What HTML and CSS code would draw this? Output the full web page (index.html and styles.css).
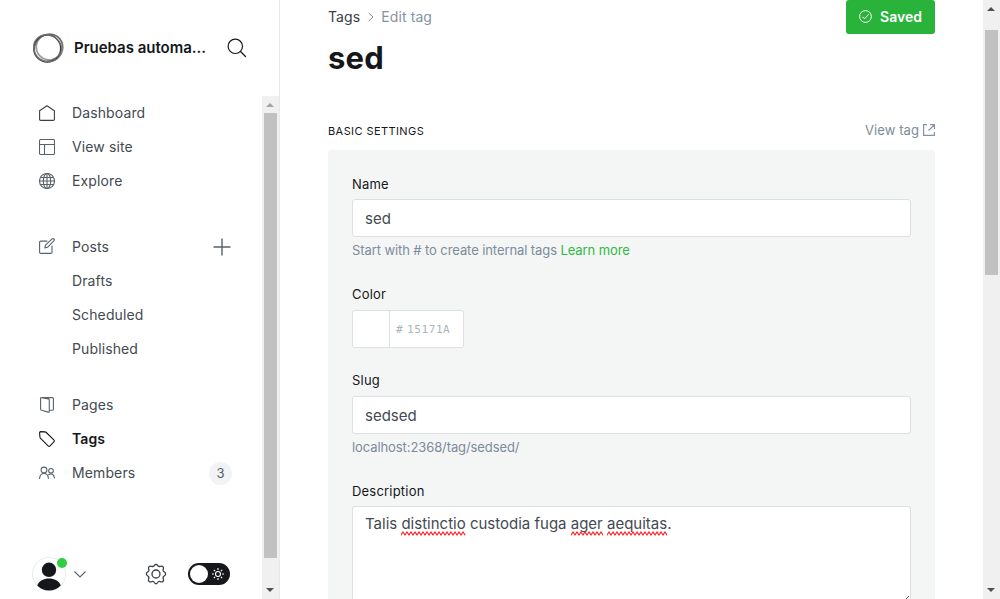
FILE: index.html
```html
<!DOCTYPE html>
<html lang="en">
<head>
<meta charset="utf-8">
<title>Edit tag</title>
<link rel="stylesheet" href="styles.css">
</head>
<body>
<div class="app">
  <nav class="sidebar">
    <header class="site">
      <svg class="site-logo" width="32" height="32" viewBox="0 0 32 32" fill="none">
        <ellipse cx="17.600" cy="15" rx="13.300" ry="13" stroke="#999" stroke-width="1.700"/>
        <circle cx="15.200" cy="16.500" r="13.500" stroke="#333" stroke-width="1.400"/>
        <ellipse cx="16.300" cy="15.700" rx="14.400" ry="12.800" transform="rotate(-38 16.300 15.700)" stroke="#666" stroke-width="1.200"/>
        <ellipse cx="15.700" cy="16.200" rx="14.600" ry="13" transform="rotate(35 15.700 16.200)" stroke="#777" stroke-width="1"/>
      </svg>
      <span class="site-name">Pruebas automa...</span>
      <svg class="search" width="20" height="20" viewBox="0 0 20 20" fill="none" stroke="#15171a" stroke-width="1.200" stroke-linecap="round"><circle cx="8.300" cy="8.300" r="7.200"/><path d="M13.500 13.500l5 5"/></svg>
    </header>
    <div class="side-body">
      <div class="side-content">
        <ul class="menu">
          <li class="item"><svg class="icon" viewBox="0 0 16 16"><path d="M.6 5.800L8 .7l7.400 5.100v8.400q0 1.200-1.200 1.200H1.800q-1.200 0-1.200-1.200z" stroke="#394047"/></svg><span>Dashboard</span></li>
          <li class="item"><svg class="icon" viewBox="0 0 16 16"><rect x=".5" y=".5" width="15" height="15" rx="1.200"/><path d="M.5 5.500h15M5.500 5.500v10"/></svg><span>View site</span></li>
          <li class="item"><svg class="icon" viewBox="0 0 16 16"><circle cx="8" cy="8" r="7.500"/><ellipse cx="8" cy="8" rx="3.700" ry="7.500"/><path d="M8 .5v15M.5 8h15M1.800 4.500h12.400M1.800 11.500h12.400"/></svg><span>Explore</span></li>
        </ul>
        <ul class="menu menu-posts">
          <li class="item"><svg class="icon icon-posts" viewBox="0 0 16 16"><path d="M8 3.100H1.700Q.6 3.100.6 4.200v10.100q0 1.100 1.100 1.100h10.200q1.100 0 1.100-1.100V8M6.500 7.200L13.100.9q.9-.7 1.800.1t.1 1.700L8.500 9.300l-2.700.7z"/></svg><span>Posts</span>
            <svg class="plus" width="18" height="18" viewBox="0 0 18 18" fill="none" stroke="#59616a" stroke-width="1.400"><path d="M9 .5v17M.5 9h17"/></svg></li>
          <li class="item sub"><span>Drafts</span></li>
          <li class="item sub"><span>Scheduled</span></li>
          <li class="item sub"><span>Published</span></li>
        </ul>
        <ul class="menu menu-manage">
          <li class="item"><svg class="icon" viewBox="0 0 16 16"><path d="M1.600 1.500q0-1 1-.8l6.700 1.200q1 .2 1 1.200v11.200q0 1-1 .8l-6.700-1.800q-1-.3-1-1.300zM3.500.6h9.800q1.100 0 1.100 1.100v10.500q0 1.100-1.100 1.100h-3"/></svg><span>Pages</span></li>
          <li class="item active"><svg class="icon" viewBox="0 0 16 16"><path d="M.6 1.600Q.6.6 1.600.6L6 .9q.8.100 1.300.6l7.500 7.400q1 1 0 2l-3.700 3.900q-1 1-2 0L1.600 7.400Q1 6.800.9 6z"/></svg><span>Tags</span></li>
          <li class="item"><svg class="icon" viewBox="0 0 16 16"><circle cx="5" cy="5" r="2.900"/><circle cx="12" cy="5.800" r="2.300"/><path d="M.6 13.500c.2-3.200 1.700-5 4.400-5s4.200 1.800 4.400 5M9.600 9.700C12 8 15.300 9.400 15.400 13"/></svg><span>Members</span><b class="count">3</b></li>
        </ul>
        <footer class="account">
          <span class="avatar"><svg width="34" height="34" viewBox="0 0 34 34"><circle cx="17" cy="17" r="16.500" fill="#fff" stroke="#e8eaed"/><circle cx="17" cy="12.800" r="7.200" fill="#15171a"/><path d="M5.200 28.500c3-9.400 20.600-9.400 23.600 0A16.500 16.500 0 0 1 5.200 28.500z" fill="#15171a"/></svg><i class="dot"></i></span>
          <svg class="chevron" width="12" height="7" viewBox="0 0 12 7" fill="none" stroke="#59616a" stroke-width="1.100"><path d="M.5.5L6 6 11.500.5"/></svg>
          <svg class="gear" width="22" height="22" viewBox="0 0 22 22" fill="none" stroke="#394047" stroke-width="1.300" stroke-linejoin="round"><circle cx="11" cy="11" r="4"/><path d="M9.300 2.500Q11 .1 12.700 2.500 13.300 4 15.200 3.300 18.900 2.300 18.400 6q-1 1.900.8 2.800 2.900 2.100 0 4.200-1.800 1-.8 2.900.8 3.800-3.100 2.800-2-.8-2.600.8-1.700 2.500-3.400 0-.6-1.600-2.500-.8-4 1-3.200-2.800 1-1.900-.8-2.900-2.900-2.100 0-4.200Q4.600 7.900 3.600 6 3.100 2.300 6.800 3.300 8.700 4 9.300 2.500z"/></svg>
          <span class="toggle"><i class="knob"></i><svg width="14" height="14" viewBox="0 0 14 14" fill="none" stroke="#fff" stroke-width="1.100"><circle cx="7" cy="7" r="2.500"/><path d="M7 1v1.900M7 11.100V13M1 7h1.900M11.100 7H13M2.800 2.800l1.300 1.300M9.900 9.900l1.300 1.300M2.800 11.200l1.300-1.300M9.900 4.100l1.300-1.300"/></svg></span>
        </footer>
      </div>
      <div class="scrollbar"><svg class="arrow light" viewBox="0 0 8 4"><path d="M4 0l4 4H0z"/></svg><div class="thumb side-thumb"></div><svg class="arrow down" viewBox="0 0 8 4"><path d="M0 0h8L4 4z"/></svg></div>
    </div>
  </nav>
  <main class="main">
    <header class="page-head">
      <div>
        <div class="crumbs"><span>Tags</span><svg width="6" height="10" viewBox="0 0 6 10" fill="none" stroke="#7c8b9a"><path d="M.7 1L5 5 .7 9"/></svg><span class="crumb-current">Edit tag</span></div>
        <h1 class="title">sed</h1>
      </div>
      <button class="saved"><svg width="13" height="13" viewBox="0 0 13 13" fill="none" stroke="#fff"><circle cx="6.500" cy="6.500" r="5.900"/><path d="M3.500 6.800l2 2 4.200-4.500"/></svg><span>Saved</span></button>
    </header>
    <div class="section-head"><h2 class="section-title">Basic settings</h2><a class="view-tag"><span>View tag</span><svg width="12" height="12" viewBox="0 0 12 12" fill="none" stroke="#8594a3" stroke-width="1.200"><path d="M4 .6H.6v10.800h10.800V8M7 .6h4.400V5M11.200.8L5.500 6.500"/></svg></a></div>
    <section class="panel">
      <label class="label">Name</label>
      <div class="input">sed</div>
      <p class="help">Start with # to create internal tags <a class="learn">Learn more</a></p>
      <label class="label label-color">Color</label>
      <div class="color"><span class="swatch"></span><span class="hash">#</span><span class="hex">15171A</span></div>
      <label class="label label-slug">Slug</label>
      <div class="input">sedsed</div>
      <p class="help">localhost:2368/tag/sedsed/</p>
      <label class="label label-desc">Description</label>
      <div class="input textarea">Talis <span class="misspelt">distinctio<svg class="wave"><defs><pattern id="zig" width="4" height="5" patternUnits="userSpaceOnUse"><path d="M-2 1L0 4 2 1 4 4 6 1" fill="none" stroke="#ff1a1a" stroke-width="1.100"/></pattern></defs><rect width="100%" height="5" fill="url(#zig)"/></svg></span> custodia fuga <span class="misspelt">ager<svg class="wave"><rect width="100%" height="5" fill="url(#zig)"/></svg></span> <span class="misspelt">aequitas<svg class="wave"><rect width="100%" height="5" fill="url(#zig)"/></svg></span>.<svg class="grip" width="6" height="6" viewBox="0 0 6 6"><path d="M0 6L6 0" stroke="#555"/></svg></div>
    </section>
  </main>
  <div class="scrollbar page-scroll"><svg class="arrow" viewBox="0 0 8 4"><path d="M4 0l4 4H0z"/></svg><div class="thumb page-thumb"></div><svg class="arrow down" viewBox="0 0 8 4"><path d="M0 0h8L4 4z"/></svg></div>
</div>
</body>
</html>
```
FILE: styles.css
```css
* { box-sizing: border-box; }
body { margin: 0; background: #fff; color: #15171a; font-family: Inter, "Liberation Sans", sans-serif; overflow: hidden; }
ul, h1, h2, p { margin: 0; padding: 0; list-style: none; }
svg { flex: none; display: block; }
.app { display: flex; height: 599px; }

.sidebar { width: 280px; flex: none; display: flex; flex-direction: column; border-right: 1px solid #e6e9eb; }
.site { height: 96px; flex: none; display: flex; align-items: center; padding-left: 32px; }
.site-name { width: 154px; padding: 0 0 2px 10px; font-size: 15px; font-weight: 600; letter-spacing: -.02px; white-space: nowrap; }
.search { margin-left: 9px; }
.side-body { flex: 1; display: flex; min-height: 0; }
.side-content { flex: 1; display: flex; flex-direction: column; padding: 0 30px 0 39px; }
.menu-posts { margin-top: 32px; }
.menu-manage { margin-top: 22px; }
.item { height: 34px; display: flex; align-items: center; font-size: 14px; letter-spacing: .12px; color: #434a52; }
.item > span { padding-bottom: 2px; }
.icon { width: 16px; height: 16px; margin-right: 17px; fill: none; stroke: #59616a; stroke-width: 1.1; stroke-linejoin: round; stroke-linecap: round; }
.icon-posts { margin-bottom: 2px; }
.sub { padding-left: 33px; }
.plus { margin: 0 1px 0 auto; }
.active { color: #15171a; font-weight: 600; }
.active .icon { stroke: #15171a; }
.count { width: 23px; height: 23px; padding-bottom: 1px; margin-left: auto; border-radius: 50%; background: #f1f3f4; display: flex; align-items: center; justify-content: center; font-size: 13px; font-weight: 400; letter-spacing: 0; color: #57606a; }
.account { display: flex; align-items: center; height: 50px; margin: auto 0 0 -7px; }
.avatar { position: relative; }
.dot { position: absolute; top: 1px; right: -1px; width: 10px; height: 10px; border-radius: 50%; background: #30cf43; }
.chevron { margin-left: 8px; }
.gear { margin-left: 59px; }
.toggle { width: 42px; height: 22px; margin-left: 21px; padding: 0 5px 0 2px; border-radius: 11px; background: #15171a; display: flex; align-items: center; justify-content: space-between; }
.knob { width: 18px; height: 18px; border-radius: 50%; background: #fff; }

.scrollbar { width: 17px; flex: none; display: flex; flex-direction: column; align-items: center; background: #f0f0f0; padding: 7px 0; }
.arrow { width: 8px; height: 4px; margin-right: 1px; fill: #505050; }
.light { fill: #a3a3a3; }
.down { margin-top: auto; }
.thumb { width: 13px; background: #c1c1c1; }
.side-thumb { height: 445px; margin-top: 6px; }
.page-thumb { height: 245px; margin-top: 19px; }

.main { flex: 1; display: flex; flex-direction: column; padding: 0 48px; min-width: 0; }
.page-head { height: 121px; flex: none; display: flex; justify-content: space-between; }
.crumbs { height: 34px; padding-bottom: 1px; display: flex; align-items: center; gap: 7.5px; font-size: 14px; color: #394047; letter-spacing: .1px; }
.crumb-current { color: #8594a3; }
.title { font-size: 31px; line-height: 38px; font-weight: 700; letter-spacing: .2px; margin-top: 5px; }
.saved { width: 89px; height: 34px; padding: 0 0 1px; border: 0; border-radius: 3px; background: #2ab33b; color: #fff; font: 600 14px Inter, "Liberation Sans", sans-serif; display: flex; align-items: center; justify-content: center; gap: 8px; }
.section-head { height: 29px; flex: none; display: flex; justify-content: space-between; }
.section-title { font-size: 11px; line-height: 20px; font-weight: 400; text-transform: uppercase; letter-spacing: .42px; }
.view-tag { height: 18px; display: flex; align-items: center; gap: 4px; font-size: 13px; color: #7c8b9a; letter-spacing: .08px; }
.panel { flex: 1; min-height: 0; padding: 24px 24px 0; background: #f4f6f6; border-radius: 3px 3px 0 0; display: flex; flex-direction: column; }
.label { height: 20px; margin-bottom: 5px; line-height: 20px; font-size: 13px; font-weight: 400; letter-spacing: .2px; flex: none; }
.input { height: 38px; flex: none; padding: 0 12px; border: 1px solid #dddfe1; border-radius: 3px; background: #fff; font-size: 15px; line-height: 38px; color: #434a52; }
.help { font-size: 13px; line-height: 20px; margin: 3px 0 1px; letter-spacing: -.09px; color: #7c8b9a; }
.learn { color: #30b943; }
.label-color { margin-top: 23px; margin-bottom: 6px; }
.color { width: 112px; height: 38px; flex: none; display: flex; align-items: center; border: 1px solid #dddfe1; border-radius: 3px; background: #fff; font-family: "DejaVu Sans Mono", monospace; font-size: 11px; color: #abb4be; }
.swatch { width: 37px; height: 36px; border-right: 1px solid #dddfe1; margin-right: 6px; }
.hash { width: 11px; padding-top: 1px; }
.hex { letter-spacing: .6px; }
.label-slug { margin-top: 22px; margin-bottom: 6px; }
.label-desc { margin-top: 23px; }
.textarea { flex: 1; position: relative; border-bottom: 0; border-radius: 3px 3px 0 0; line-height: 34px; }
.misspelt { position: relative; }
.wave { position: absolute; left: 0; bottom: -3px; width: 100%; height: 5px; }
.grip { position: absolute; right: 1px; bottom: -3px; }
```
